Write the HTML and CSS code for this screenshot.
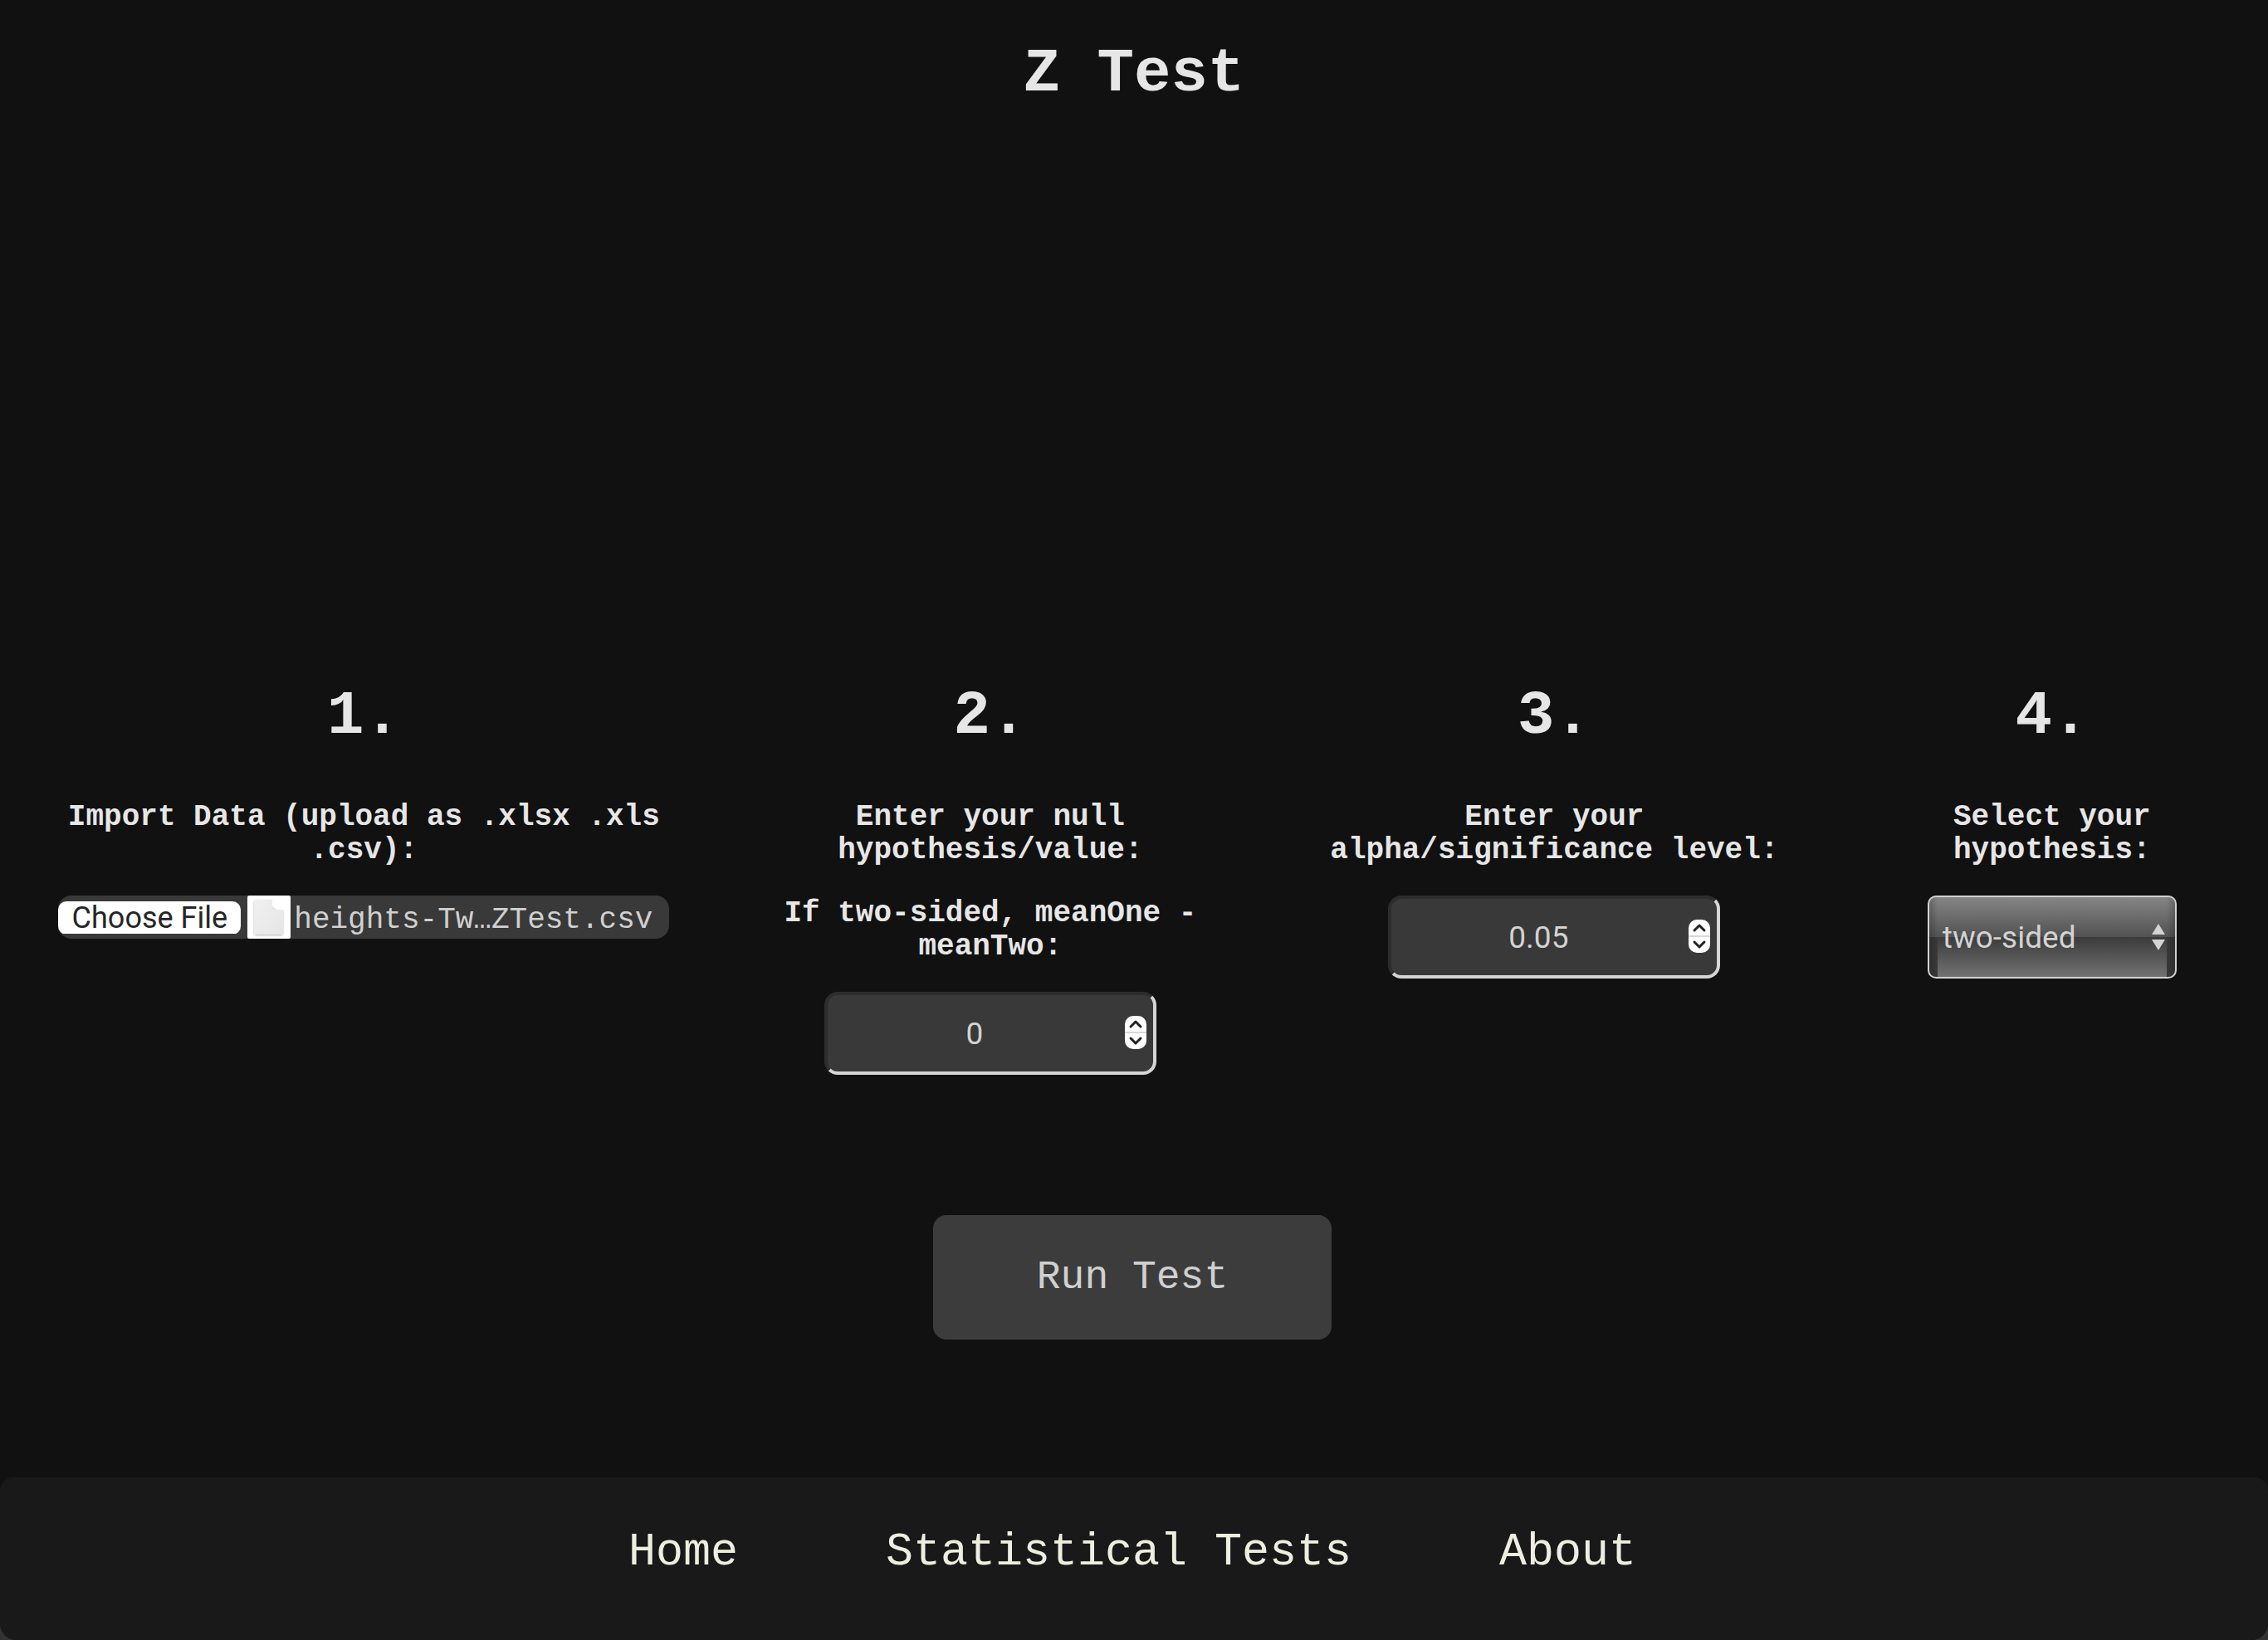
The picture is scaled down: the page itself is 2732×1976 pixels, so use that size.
FILE: index.html
```html
<!DOCTYPE html>
<html lang="en">
<head>
<meta charset="utf-8">
<meta name="viewport" content="width=device-width, initial-scale=1">
<title>Z Test</title>
<link rel="stylesheet" href="styles.css">
</head>
<body>
<h1 class="title">Z Test</h1>
<form class="test-form">
  <div class="steps">
    <section class="step">
      <h2 class="step-number">1.</h2>
      <label class="step-label" for="data-file">Import Data (upload as .xlsx .xls .csv):</label>
      <div class="file-field">
        <input class="file-input" id="data-file" type="file" accept=".xlsx,.xls,.csv">
        <svg class="file-icon" viewBox="0 0 52 52" aria-hidden="true">
          <defs>
            <linearGradient id="paper" x1="0" y1="0" x2="1" y2="1">
              <stop offset="0" stop-color="#f0f0f0"/>
              <stop offset="1" stop-color="#e6e6e6"/>
            </linearGradient>
            <linearGradient id="fold" x1="0" y1="1" x2="1" y2="0">
              <stop offset="0" stop-color="#c8c8c8"/>
              <stop offset=".25" stop-color="#fff"/>
            </linearGradient>
            <filter id="paper-shadow" x="-20%" y="-20%" width="140%" height="140%">
              <feDropShadow dx="0" dy="1" stdDeviation="1" flood-color="#000" flood-opacity=".3"/>
            </filter>
          </defs>
          <rect width="52" height="52" rx="2" fill="#fff"/>
          <path d="M11 5h18l14 13v26a3 3 0 0 1-3 3H11a3 3 0 0 1-3-3V8a3 3 0 0 1 3-3z" fill="url(#paper)" filter="url(#paper-shadow)"/>
          <path d="M30 5v9a3 3 0 0 0 3 3h11z" fill="url(#fold)"/>
        </svg>
        <output class="file-name" for="data-file">heights-Tw…ZTest.csv</output>
      </div>
    </section>
    <section class="step">
      <h2 class="step-number">2.</h2>
      <label class="step-label" for="null-value">Enter your null hypothesis/value:</label>
      <label class="step-label" for="null-value">If two-sided, meanOne - meanTwo:</label>
      <input class="number-input" id="null-value" type="number" value="0">
    </section>
    <section class="step">
      <h2 class="step-number">3.</h2>
      <label class="step-label" for="alpha">Enter your alpha/significance level:</label>
      <input class="number-input" id="alpha" type="number" step="0.01" value="0.05">
    </section>
    <section class="step">
      <h2 class="step-number">4.</h2>
      <label class="step-label" for="hypothesis">Select your hypothesis:</label>
      <select class="select-input" id="hypothesis">
        <option>two-sided</option>
        <option>larger</option>
        <option>smaller</option>
      </select>
    </section>
  </div>
  <button class="run-button" type="button">Run Test</button>
</form>
<footer class="footer">
  <nav class="nav">
    <a class="nav-link" href="#home">Home</a>
    <a class="nav-link" href="#tests">Statistical Tests</a>
    <a class="nav-link" href="#about">About</a>
  </nav>
</footer>
</body>
</html>
```
FILE: styles.css
```css
* {
  box-sizing: border-box;
}

html {
  background: #333;
}

body {
  display: flex;
  flex-direction: column;
  min-height: 100vh;
  margin: 0;
  border-radius: 0 0 20px 20px;
  background: #111;
  color: #e6e6e6;
  font-family: "Courier New", "Liberation Mono", monospace;
}

.title {
  margin: 47px 0 0;
  font-size: 74px;
  line-height: 84px;
  text-align: center;
}

.test-form {
  display: flex;
  flex: 1;
  flex-direction: column;
  align-items: center;
  justify-content: flex-end;
  gap: 169px;
  padding: 0 4px 166px 0;
}

.steps {
  display: grid;
  grid-template-columns: 876fr 632fr 726fr 472fr;
  width: 100%;
  padding-right: 20px;
}

.step {
  display: flex;
  flex-direction: column;
  align-items: center;
  gap: 34px;
  padding: 0 64px;
}

.step-number {
  margin: 0 0 24px;
  font-size: 74px;
  line-height: 84px;
}

.step-label {
  padding-top: 2px;
  font-size: 36px;
  font-weight: bold;
  line-height: 40px;
  text-align: center;
}

.file-field {
  display: flex;
  align-items: center;
  width: 736px;
  height: 52px;
  border-radius: 16px;
  background: #393939;
  color: #d0d0d0;
}

.file-input {
  width: 220px;
  height: 40px;
  overflow: hidden;
  color: transparent;
  font-size: 36px;
}

.file-input::file-selector-button {
  width: 220px;
  height: 40px;
  margin: 0;
  padding: 0;
  border: 0;
  border-radius: 10px;
  background: #fff;
  color: #262626;
  font-family: Roboto, sans-serif;
  font-size: 36px;
  line-height: 40px;
}

.file-icon {
  width: 52px;
  height: 52px;
  margin: 0 4px 0 8px;
}

.file-name {
  padding-top: 8px;
  font-size: 36px;
  line-height: 40px;
}

.number-input {
  width: 400px;
  height: 100px;
  padding: 0 8px 0 0;
  border: 4px solid;
  border-color: #2d2d2d #d5d5d5 #d5d5d5 #2d2d2d;
  border-radius: 16px;
  background: #393939;
  color: #d3d3d3;
  font-family: Roboto, sans-serif;
  font-size: 37px;
  text-align: center;
}

.number-input::-webkit-inner-spin-button {
  width: 26px;
  height: 40px;
  margin: 0 0 0 4px;
  border-radius: 10px;
  background: #fff url("data:image/svg+xml,%3Csvg xmlns='http://www.w3.org/2000/svg' viewBox='0 0 26 40'%3E%3Cpath d='M0 20h26' stroke='%23d8d8d8' stroke-width='2'/%3E%3Cpath d='M7 13l6-6 6 6M7 27l6 6 6-6' fill='none' stroke='%23222' stroke-width='3' stroke-linecap='round' stroke-linejoin='round'/%3E%3C/svg%3E");
  opacity: 1;
  appearance: none;
}

.select-input {
  width: 300px;
  height: 100px;
  padding: 0 16px;
  border: 2px solid #d3d3d3;
  border-radius: 10px;
  background:
    url("data:image/svg+xml,%3Csvg xmlns='http://www.w3.org/2000/svg' viewBox='0 0 16 32'%3E%3Cpath d='M8 0l8 13H0zM0 19h16l-8 13z' fill='%23d3d3d3'/%3E%3C/svg%3E") right 12px center / 16px 32px no-repeat,
    linear-gradient(90deg, rgba(0, 0, 0, .2), transparent 10px, transparent calc(100% - 10px), rgba(0, 0, 0, .2)),
    linear-gradient(#858585, #525252) top / 100% 48px no-repeat,
    linear-gradient(#3b3b3b, #727272) bottom / calc(100% - 20px) 48px no-repeat,
    #393939;
  color: #d3d3d3;
  font-family: Roboto, sans-serif;
  font-size: 37px;
  appearance: none;
}

.run-button {
  width: 480px;
  height: 150px;
  padding: 0;
  border: 0;
  border-radius: 16px;
  background: #3c3c3c;
  color: #d0d0d0;
  font-family: inherit;
  font-size: 48px;
}

.footer {
  padding: 60px 0 74px;
  border-radius: 16px 16px 20px 20px;
  background: #191919;
}

.nav {
  display: flex;
  justify-content: center;
  gap: 178px;
  padding-right: 4px;
}

.nav-link {
  color: #eeeee0;
  font-size: 55px;
  line-height: 62px;
  text-decoration: none;
}
```
